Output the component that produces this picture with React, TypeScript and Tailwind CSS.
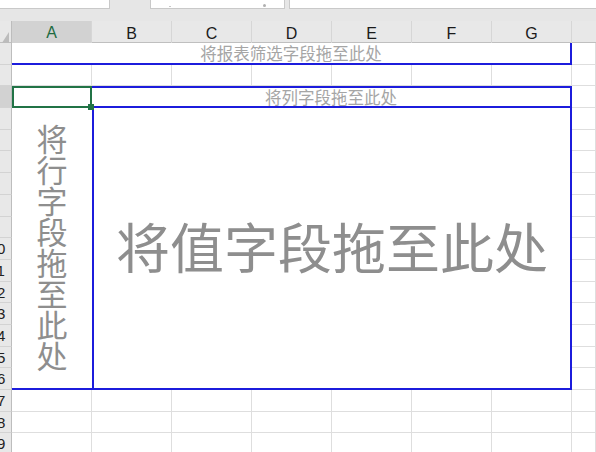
import React from "react";

const blue = "border-[#1c1cdc]";
const cjk = "font-['Noto_Sans_CJK_SC','Noto_Sans',sans-serif]";
const latin = "font-['Liberation_Sans',Arial,sans-serif]";
const cols = ["A", "B", "C", "D", "E", "F", "G"];

// Row numbers are centred in a header that is mostly scrolled off to the left,
// so only the second digit of two-digit rows shows.
function RowHead({ n, active }: { n: number; active?: boolean }) {
  return (
    <div
      className={`overflow-hidden border-r border-b border-r-[#bdbdbd] border-b-[#d3d3d3] ${
        active ? "bg-[#d2d2d2]" : "bg-[#e8e8e8]"
      } ${latin} text-[15px] leading-[21px] text-[#222]`}
    >
      {n >= 10 && <div className="-ml-[14px] w-[22px] text-center">{n}</div>}
    </div>
  );
}

function Cell() {
  return <div className="border-r border-b border-[#dedede] bg-white" />;
}

function Cells({ count }: { count: number }) {
  return (
    <>
      {Array.from({ length: count }, (_, i) => (
        <Cell key={i} />
      ))}
    </>
  );
}

export default function App() {
  const body: React.ReactNode[] = [];

  // row 1: report filter area
  body.push(<RowHead key="h1" n={1} />);
  body.push(
    <div
      key="filter"
      className={`col-span-7 flex items-center justify-center border-r-2 border-b-2 ${blue} bg-white ${cjk} text-[16.5px] leading-none text-[#a5a5a5]`}
    >
      将报表筛选字段拖至此处
    </div>
  );
  body.push(<Cell key="c1" />);

  // row 2
  body.push(<RowHead key="h2" n={2} />);
  body.push(<Cells key="c2" count={8} />);

  // row 3: active cell + column area
  body.push(<RowHead key="h3" n={3} active />);
  body.push(
    <div key="a3" className="relative z-10 border-2 border-[#217346] bg-white">
      <div className="absolute -right-[4px] -bottom-[4px] h-[6px] w-[6px] bg-[#217346]" />
    </div>
  );
  body.push(
    <div
      key="colarea"
      className={`col-span-6 flex items-center justify-center border-t-2 border-r-2 border-b-2 ${blue} bg-white ${cjk} text-[16.5px] leading-none text-[#a5a5a5]`}
    >
      将列字段拖至此处
    </div>
  );
  body.push(<Cell key="c3" />);

  // rows 4-16: row area + values area
  body.push(<RowHead key="h4" n={4} />);
  body.push(
    <div
      key="rowarea"
      className={`row-span-13 flex items-center justify-center border-b-2 ${blue} bg-white`}
    >
      <span
        className={`[writing-mode:vertical-rl] ${cjk} text-[31px] leading-none text-[#8e8e8e]`}
      >
        将行字段拖至此处
      </span>
    </div>
  );
  body.push(
    <div
      key="values"
      className={`col-span-6 row-span-13 flex items-center justify-center border-l-2 border-r-2 border-b-2 ${blue} bg-white pb-[4px] ${cjk} text-[54px] leading-none text-[#8e8e8e]`}
    >
      将值字段拖至此处
    </div>
  );
  body.push(<Cell key="c4" />);
  for (let n = 5; n <= 16; n++) {
    body.push(<RowHead key={`h${n}`} n={n} />);
    body.push(<Cell key={`c${n}`} />);
  }

  // rows 17-19
  for (let n = 17; n <= 19; n++) {
    body.push(<RowHead key={`h${n}`} n={n} />);
    body.push(<Cells key={`c${n}`} count={8} />);
  }

  return (
    <div className="h-[452px] w-[596px] overflow-hidden bg-white">
      {/* formula bar strip */}
      <div className="flex h-[21px] items-start bg-[#e6e6e6]">
        <div className="h-[9px] w-[110px] border-r border-b border-[#c9c9c9] bg-white" />
        <div className="ml-[40px] flex h-[9px] w-[135px] items-end justify-between border-x border-b border-[#c9c9c9] bg-white px-[18px]">
          <span className="mb-[1px] h-[1px] w-[2px] bg-[#c8c8c8]" />
          <span className="mb-[1px] h-[3px] w-[3px] rounded-full bg-[#b0b0b0]" />
        </div>
        <div className="ml-[4px] h-[9px] flex-1 border-l border-b border-[#c9c9c9] bg-white" />
      </div>

      {/* column headers */}
      <div className="grid h-[22px] grid-cols-[12px_repeat(7,80px)_1fr] border-b border-[#bfbfbf] bg-[#e8e8e8]">
        <div className="flex items-end border-r border-[#bdbdbd]">
          <svg width="11" height="21" viewBox="0 0 11 21">
            <polygon points="0,20 9,20 9,6" fill="#bcbcbc" />
          </svg>
        </div>
        {cols.map((c) => (
          <div
            key={c}
            className={`flex items-center justify-center border-r border-[#d6d6d6] ${latin} text-[16px] ${
              c === "A"
                ? "border-b-2 border-b-[#217346] bg-[#d2d2d2] text-[#1e6b41]"
                : "text-[#1a1a1a]"
            }`}
          >
            {c}
          </div>
        ))}
        <div />
      </div>

      {/* sheet body */}
      <div className="grid grid-cols-[12px_repeat(7,80px)_1fr] grid-rows-[repeat(19,21.7px)]">
        {body}
      </div>
    </div>
  );
}
